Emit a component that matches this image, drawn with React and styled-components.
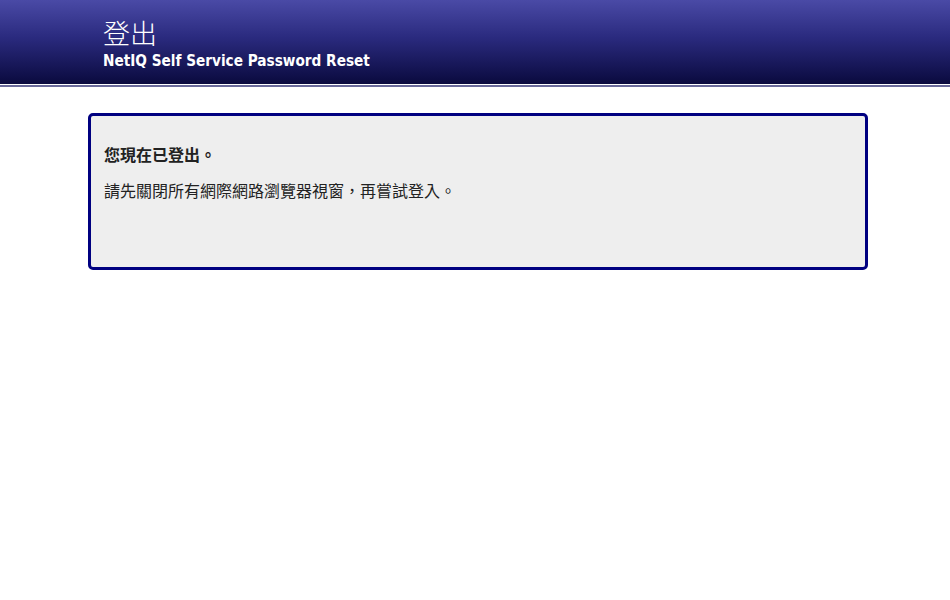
import React from 'react'
import styled, { createGlobalStyle } from 'styled-components'

const GlobalStyle = createGlobalStyle`
  html, body {
    margin: 0;
    padding: 0;
    background: #fff;
  }
  body {
    font-family: "Liberation Serif", "Noto Sans CJK TC", serif;
  }
`

const Header = styled.header`
  height: 84px;
  background: linear-gradient(to bottom, #4a4aa6 0%, #2a2a7e 45%, #0a0a3e 100%);
  border-bottom: 1px solid #fff;
  box-shadow: 0 2px 0 #6a6a9a;
`

const HeaderInner = styled.div`
  padding: 17px 0 0 103px;
  color: #fff;
`

const PageTitle = styled.h1`
  margin: 0;
  font-family: "Noto Sans CJK TC", sans-serif;
  font-weight: 300;
  font-size: 27px;
  line-height: 32px;
`

const AppName = styled.div`
  font-family: "DejaVu Sans Condensed", "DejaVu Sans", sans-serif;
  font-weight: bold;
  font-size: 15.2px;
  line-height: 20px;
  margin-top: 2px;
`

const Content = styled.main`
  padding: 28px 82px 0 88px;
`

const MessageBox = styled.section`
  height: 151px;
  box-sizing: content-box;
  background: #eeeeee;
  border: 3px solid #000080;
  border-radius: 5px;
  padding: 0 13px;
`

const Heading = styled.p`
  margin: 26px 0 0;
  font-family: "Noto Sans CJK TC", sans-serif;
  font-weight: bold;
  font-size: 16px;
  line-height: 24px;
  color: #222;
`

const Body = styled.p`
  margin: 12px 0 0;
  font-family: "Noto Sans CJK TC", sans-serif;
  font-size: 16px;
  line-height: 24px;
  color: #222;
`

export default function App() {
  return (
    <>
      <GlobalStyle />
      <Header>
        <HeaderInner>
          <PageTitle>登出</PageTitle>
          <AppName>NetIQ Self Service Password Reset</AppName>
        </HeaderInner>
      </Header>
      <Content>
        <MessageBox>
          <Heading>您現在已登出。</Heading>
          <Body>請先關閉所有網際網路瀏覽器視窗，再嘗試登入。</Body>
        </MessageBox>
      </Content>
    </>
  )
}
